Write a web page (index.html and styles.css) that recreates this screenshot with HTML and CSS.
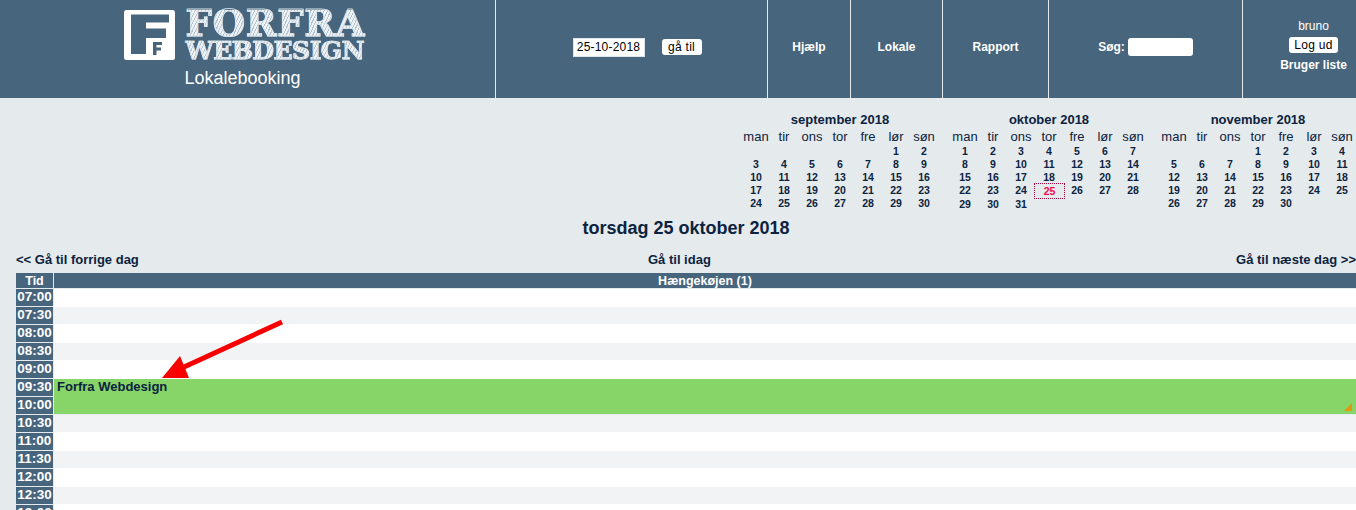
FILE: index.html
```html
<!DOCTYPE html>
<html lang="da">
<head>
<meta charset="utf-8">
<title>Lokalebooking</title>
<link rel="stylesheet" href="styles.css">
</head>
<body>
<header class="topbar">
  <div class="cell brand">
    <div class="logo">
      <svg class="logo-mark" viewBox="0 0 51 50" aria-hidden="true">
        <rect x="0" y="0" width="51" height="50" rx="2.500" fill="#fff"/>
        <path d="M7 4.500H45V12.500H22V18.500H42V28H22V44H7Z" fill="#47657c"/>
        <path d="M29 32H38V35H32.500V37.500H37V40.500H32.500V45H29Z" fill="#47657c"/>
      </svg>
      <div class="logo-words">
        <span class="logo-top">FORFRA</span>
        <span class="logo-bottom">WEBDESIGN</span>
      </div>
    </div>
    <div class="brand-name">Lokalebooking</div>
  </div>
  <div class="cell goto">
    <span class="date-field">25-10-2018</span>
    <button class="btn">gå til</button>
  </div>
  <a class="cell link">Hjælp</a>
  <a class="cell link">Lokale</a>
  <a class="cell link">Rapport</a>
  <div class="cell search"><span class="search-label">Søg:</span><span class="search-field"></span></div>
  <div class="cell user">
    <span class="user-name">bruno</span>
    <button class="btn btn-logout">Log ud</button>
    <a class="user-list">Bruger liste</a>
  </div>
</header>

<main class="content">
  <section class="calendars">
    <div class="month">
      <div class="month-title">september 2018</div>
      <div class="weekdays"><span>man</span><span>tir</span><span>ons</span><span>tor</span><span>fre</span><span>lør</span><span>søn</span></div>
      <div class="days">
        <span></span><span></span><span></span><span></span><span></span><span>1</span><span>2</span>
        <span>3</span><span>4</span><span>5</span><span>6</span><span>7</span><span>8</span><span>9</span>
        <span>10</span><span>11</span><span>12</span><span>13</span><span>14</span><span>15</span><span>16</span>
        <span>17</span><span>18</span><span>19</span><span>20</span><span>21</span><span>22</span><span>23</span>
        <span>24</span><span>25</span><span>26</span><span>27</span><span>28</span><span>29</span><span>30</span>
      </div>
    </div>
    <div class="month">
      <div class="month-title">oktober 2018</div>
      <div class="weekdays"><span>man</span><span>tir</span><span>ons</span><span>tor</span><span>fre</span><span>lør</span><span>søn</span></div>
      <div class="days days-tall">
        <span>1</span><span>2</span><span>3</span><span>4</span><span>5</span><span>6</span><span>7</span>
        <span>8</span><span>9</span><span>10</span><span>11</span><span>12</span><span>13</span><span>14</span>
        <span>15</span><span>16</span><span>17</span><span>18</span><span>19</span><span>20</span><span>21</span>
        <span>22</span><span>23</span><span>24</span><span class="today">25</span><span>26</span><span>27</span><span>28</span>
        <span>29</span><span>30</span><span>31</span>
      </div>
    </div>
    <div class="month">
      <div class="month-title">november 2018</div>
      <div class="weekdays"><span>man</span><span>tir</span><span>ons</span><span>tor</span><span>fre</span><span>lør</span><span>søn</span></div>
      <div class="days">
        <span></span><span></span><span></span><span>1</span><span>2</span><span>3</span><span>4</span>
        <span>5</span><span>6</span><span>7</span><span>8</span><span>9</span><span>10</span><span>11</span>
        <span>12</span><span>13</span><span>14</span><span>15</span><span>16</span><span>17</span><span>18</span>
        <span>19</span><span>20</span><span>21</span><span>22</span><span>23</span><span>24</span><span>25</span>
        <span>26</span><span>27</span><span>28</span><span>29</span><span>30</span>
      </div>
    </div>
  </section>

  <h1 class="day-title">torsdag 25 oktober 2018</h1>

  <nav class="day-nav">
    <a>&lt;&lt; Gå til forrige dag</a>
    <a>Gå til idag</a>
    <a class="day-next">Gå til næste dag &gt;&gt;</a>
  </nav>

  <section class="schedule">
    <div class="times">
      <div class="time-head">Tid</div>
      <div class="time">07:00</div>
      <div class="time">07:30</div>
      <div class="time">08:00</div>
      <div class="time">08:30</div>
      <div class="time">09:00</div>
      <div class="time">09:30</div>
      <div class="time">10:00</div>
      <div class="time">10:30</div>
      <div class="time">11:00</div>
      <div class="time">11:30</div>
      <div class="time">12:00</div>
      <div class="time">12:30</div>
      <div class="time">13:00</div>
    </div>
    <div class="lane">
      <div class="lane-head">Hængekøjen (1)</div>
      <div class="slot slot-first"></div>
      <div class="slot slot-grey"></div>
      <div class="slot slot-white"></div>
      <div class="slot slot-grey"></div>
      <div class="slot slot-white"></div>
      <div class="booking">Forfra Webdesign<i class="resize-mark"></i></div>
      <div class="slot slot-grey"></div>
      <div class="slot slot-white"></div>
      <div class="slot slot-grey"></div>
      <div class="slot slot-white"></div>
      <div class="slot slot-grey"></div>
      <div class="slot slot-white"></div>
      <svg class="arrow" viewBox="0 0 130 70" aria-hidden="true">
        <path d="M120 2L22 47" stroke="#f80000" stroke-width="5" fill="none"/>
        <path d="M0 58L18 36L27 58Z" fill="#f80000"/>
      </svg>
    </div>
  </section>
</main>
</body>
</html>
```

FILE: styles.css
```css
* { box-sizing: border-box; }
html, body { height: 100%; overflow: hidden; }
body {
  margin: 0;
  background: #e5eaed;
  color: #0c2340;
  font-family: "Liberation Sans", Arial, sans-serif;
}

/* Top bar */
.topbar {
  display: grid;
  grid-template-columns: 495px 272px 83px 92px 106px 194px 1fr;
  height: 98px;
  background: #47657c;
  color: #fff;
}
.cell {
  display: flex;
  align-items: center;
  justify-content: center;
  border-left: 1px solid #e5eaed;
}
.brand {
  flex-direction: column;
  justify-content: flex-start;
  border-left: 0;
  padding: 10px 0 0 0;
}
.logo { display: flex; gap: 11px; margin-left: -6px; }
.logo-mark { width: 51px; height: 50px; display: block; }
.logo-words { display: flex; flex-direction: column; font-family: "DejaVu Serif", serif; font-weight: 700; }
.logo-words span {
  display: block;
  background: repeating-linear-gradient(115deg, #eef3f6 0 2px, #b4c3cf 2px 3px);
  -webkit-background-clip: text;
  background-clip: text;
  color: transparent;
  -webkit-text-stroke: 1px rgba(222, 231, 237, .85);
}
.logo-top { font-size: 37px; line-height: 27px; height: 31px; letter-spacing: .8px; }
.logo-bottom { font-size: 25px; line-height: 19px; letter-spacing: -.5px; }
.brand-name { font-size: 18px; line-height: 20px; margin-top: 8px; margin-left: -10px; }

.goto { gap: 17px; padding: 0 0 4px 11px; }
.date-field {
  width: 72px;
  height: 19px;
  background: #fff;
  color: #000;
  border: 1px solid #dfe4e8;
  font-size: 12px;
  line-height: 17px;
  text-align: center;
  letter-spacing: .2px;
}
.btn {
  background: #fff;
  color: #000;
  border: 0;
  border-radius: 3px;
  height: 16px;
  width: 40px;
  padding: 0;
  font-family: inherit;
  font-size: 12px;
  line-height: 16px;
  letter-spacing: .3px;
}
.link { font-size: 12px; font-weight: 700; padding-bottom: 4px; }
.search { gap: 3px; padding-bottom: 4px; }
.search-label { font-size: 12px; font-weight: 700; }
.search-field { width: 65px; height: 18px; background: #fff; border-radius: 3px; }
.user { flex-direction: column; justify-content: flex-start; padding: 20px 0 0 28px; }
.user-name { font-size: 12px; line-height: 13px; margin-bottom: 4px; }
.btn-logout { width: 49px; height: 16px; }
.user-list { font-size: 12px; font-weight: 700; line-height: 14px; margin-top: 5px; }

/* Month calendars */
.content { padding-left: 16px; }
.calendars {
  display: flex;
  justify-content: flex-end;
  gap: 13px;
  padding-top: 15px;
  height: 119px;
}
.month { width: 196px; }
.month-title { font-size: 13px; font-weight: 700; line-height: 14px; text-align: center; }
.weekdays, .days { display: grid; grid-template-columns: repeat(7, 28px); text-align: center; }
.weekdays { font-size: 13px; line-height: 15px; margin-top: 2px; height: 16px; }
.days { font-size: 10.500px; font-weight: 700; line-height: 13px; grid-auto-rows: 13px; }
.days-tall { grid-template-rows: repeat(4, 13px) 15px; }
.days-tall span:nth-last-child(-n+3) { padding-top: 1px; }
.today { color: #f2094f; outline: 1px dotted #a3003c; margin-right: -1px; height: 14px; line-height: 14px; }

.day-title {
  margin: 0;
  font-size: 18px;
  font-weight: 700;
  line-height: 22px;
  text-align: center;
  height: 26px;
}

.day-nav {
  display: grid;
  grid-template-columns: 632px auto 1fr;
  font-size: 13px;
  font-weight: 700;
  line-height: 14px;
  margin-top: 10px;
  height: 20px;
}
.day-next { text-align: right; }

/* Schedule */
.schedule { display: grid; grid-template-columns: 38px 1fr; }
.times, .lane { display: flex; flex-direction: column; }
.lane { position: relative; }
.time-head, .lane-head {
  height: 15px;
  background: #47657c;
  color: #fff;
  font-size: 12.500px;
  font-weight: 700;
  line-height: 16px;
  text-align: center;
}
.time-head { margin: 0 1px 1px 0; }
.lane-head { margin-bottom: 1px; }
.time {
  height: 17px;
  margin: 0 1px 1px 0;
  background: #47657c;
  color: #fff;
  font-size: 13.500px;
  font-weight: 700;
  line-height: 16px;
  text-align: center;
  flex: none;
}
.slot { flex: none; }
.slot-first { height: 18px; background: #fff; }
.slot-white { height: 19px; background: #fff; }
.slot-grey { height: 17px; background: #f1f3f5; }
.booking {
  position: relative;
  flex: none;
  height: 35px;
  margin-bottom: 1px;
  padding: 1px 3px;
  background: #87d468;
  font-size: 13px;
  font-weight: 700;
  line-height: 14px;
}
.resize-mark {
  position: absolute;
  right: 4px;
  bottom: 3px;
  width: 8px;
  height: 8px;
  background: #e0990f;
  clip-path: polygon(100% 0, 100% 100%, 0 100%);
}
.arrow {
  position: absolute;
  left: 108px;
  top: 47px;
  width: 130px;
  height: 70px;
  overflow: visible;
}
```
